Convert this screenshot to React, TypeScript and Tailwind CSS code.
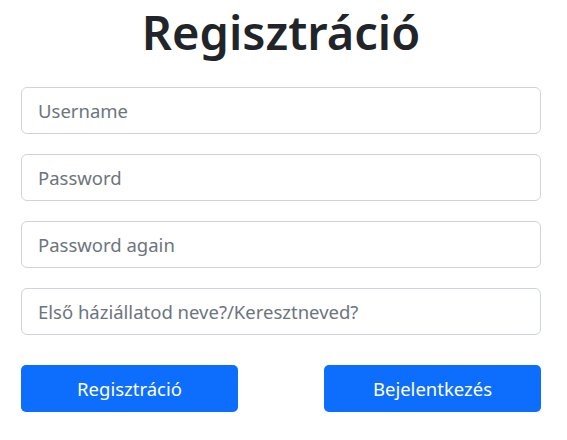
export default function App() {
  const font = { fontFamily: '"Noto Sans", "Open Sans", sans-serif' };
  const fields = ["Username", "Password", "Password again", "Első háziállatod neve?/Keresztneved?"];
  return (
    <div className="w-[567px] h-[440px] bg-white text-[#212529] pt-[2px]" style={font}>
      <div className="w-[520px] ml-[21px] flex flex-col">
        <h1 className="text-center text-[47px] leading-[60px] font-semibold mb-[25px]">Regisztráció</h1>
        <div className="flex flex-col gap-[20px]">
          {fields.map((f) => (
            <input
              key={f}
              placeholder={f}
              type="text"
              className="h-[47px] w-full border border-[#ced4da] rounded-[6px] px-[16px] text-[18.5px] placeholder:text-[#6c757d] outline-none"
            />
          ))}
        </div>
        <div className="flex justify-between mt-[30px]">
          <button className="w-[217px] h-[47px] bg-[#0d6efd] text-white rounded-[5px] text-[18.5px]">Regisztráció</button>
          <button className="w-[217px] h-[47px] bg-[#0d6efd] text-white rounded-[5px] text-[18.5px]">Bejelentkezés</button>
        </div>
      </div>
    </div>
  );
}
